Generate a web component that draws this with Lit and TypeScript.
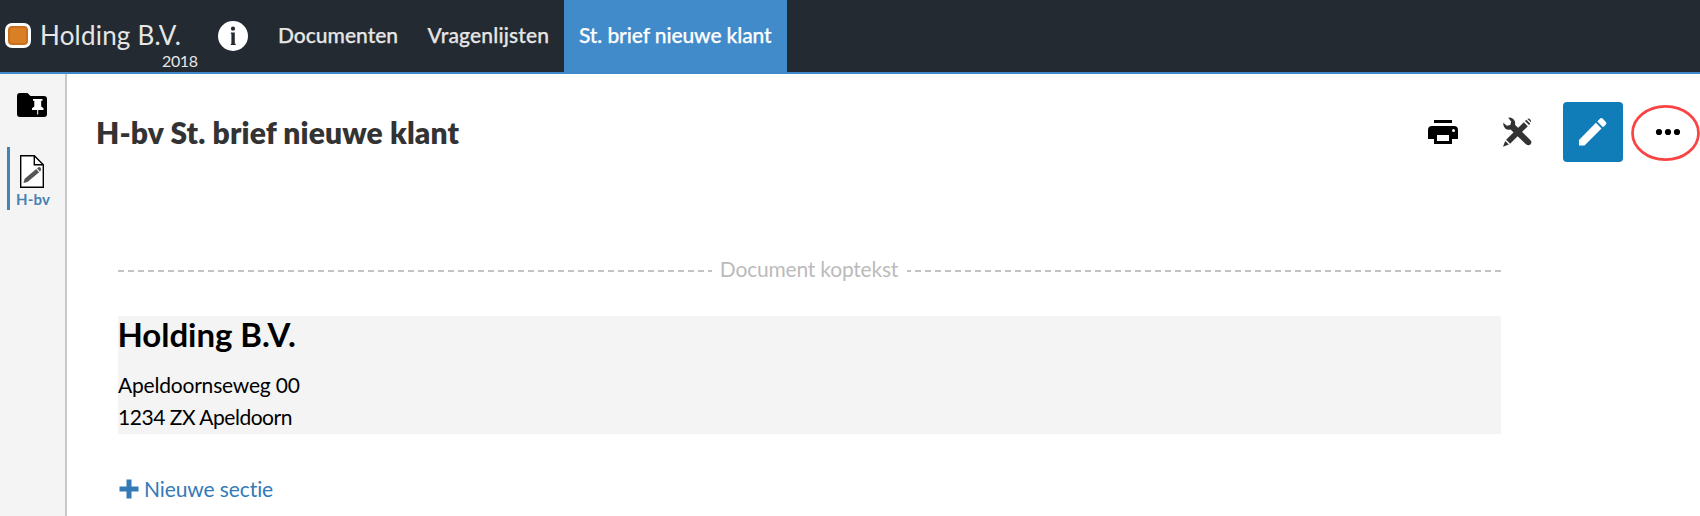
import { LitElement, html, css } from "lit";
import { customElement } from "lit/decorators.js";

@customElement("app-root")
export class AppRoot extends LitElement {
  static styles = css`
    :host { display: block; height: 516px; overflow: hidden; background: #fff; font-family: Lato, sans-serif; font-variant-ligatures: none; color: #333; }
    * { box-sizing: border-box; }
    svg { display: block; flex: none; }
    .bar { height: 74px; display: flex; background: #232a31; border-bottom: 2px solid #428bca; color: #e6e6e6; white-space: nowrap; }
    .brand { width: 203px; padding: 21px 0 0 5px; display: flex; flex-direction: column; }
    .brand-row { display: flex; align-items: center; height: 29px; }
    .swatch { width: 26px; height: 25px; border: 3px solid #fff; border-radius: 7px; background: #d98026; box-shadow: inset 0 0 0 2px #c87020; }
    .name { margin-left: 9px; font-size: 26px; line-height: 27px; letter-spacing: 0.2px; }
    .year { font-size: 16px; line-height: 22px; margin-left: 157px; letter-spacing: -0.35px; }
    .info { margin: 21px 0 0 15px; width: 30px; height: 30px; }
    nav { display: flex; margin-left: 15px; }
    .tab { height: 72px; padding: 0 15px; font-size: 21px; line-height: 69px; font-weight: 500; -webkit-text-stroke: 0.25px currentColor; }
    .docs { width: 149px; }
    .lists { width: 152px; padding-left: 15.5px; letter-spacing: 0.15px; }
    .active { width: 223px; background: #428bca; color: #fff; height: 74px; letter-spacing: -0.1px; }
    .body { display: flex; height: 442px; }
    aside { width: 67px; background: #f4f4f4; border-right: 2px solid #c8c8c8; }
    .pinned { padding: 19px 0 0 17px; height: 73px; }
    .doc { margin-left: 7px; height: 63px; border-left: 3px solid #4682b4; padding: 8px 0 0 6px; }
    .doc svg { margin-left: 4px; }
    .doc span { display: block; font-size: 15px; line-height: 22px; color: #4682b4; font-weight: 700; letter-spacing: 0.2px; }
    main { flex: 1; }
    .head { display: flex; height: 117px; padding: 28px 0 0 29px; }
    h1 { margin: 0; flex: 1; font-size: 30px; line-height: 60px; font-weight: 800; white-space: nowrap; letter-spacing: 0.14px; }
    .tools { display: flex; }
    .tool { width: 60px; height: 60px; display: flex; align-items: center; justify-content: center; border-radius: 4px; }
    .tool + .tool { margin-left: 15px; }
    .edit { background: #107db8; }
    .tool.more { width: 69px; height: 60px; margin-left: 8px; }
    .sheet { width: 1383px; margin-left: 51px; padding-top: 62px; }
    .divider { display: flex; align-items: center; height: 36px; color: #bbb; font-size: 21px; letter-spacing: -0.2px; }
    .rule { flex: 1; height: 2px; background: repeating-linear-gradient(90deg, #c3c3c3 0 6px, transparent 6px 10px); }
    .rule.end { background: repeating-linear-gradient(270deg, #c3c3c3 0 6px, transparent 6px 10px); }
    .divider span { margin: 0 9px 0 8px; white-space: nowrap; line-height: 31px; padding-bottom: 5px; }
    .letterhead { margin-top: 27px; height: 118px; background: #f4f4f4; color: #000; white-space: nowrap; }
    h2 { margin: 0 0 0 -0.5px; font-size: 33px; line-height: 36px; font-weight: 700; letter-spacing: -0.05px; }
    .address { padding-top: 17px; font-size: 21px; line-height: 32px; }
    .street { letter-spacing: -0.2px; }
    .city { letter-spacing: -0.47px; }
    .add { display: flex; align-items: center; margin-top: 39px; height: 32px; color: #337ab7; font-size: 21px; line-height: 32px; letter-spacing: -0.1px; }
    .add svg { margin-left: 1px; }
    .add span { margin-left: 5px; }
  `;

  render() {
    return html`
      <header class="bar">
        <div class="brand">
          <div class="brand-row"><div class="swatch"></div><span class="name">Holding B.V.</span></div>
          <span class="year">2018</span>
        </div>
        <svg class="info" viewBox="0 0 30 30"><circle cx="15" cy="15" r="15" fill="#fff"/><circle cx="15" cy="7.700" r="2.100" fill="#232a31"/><path fill="#232a31" d="M12.800 11.500h4v11.300h.9v1.200h-4.900v-1.200h.6v-10.100h-.6z"/></svg>
        <nav>
          <span class="tab docs">Documenten</span><span class="tab lists">Vragenlijsten</span><span class="tab active">St. brief nieuwe klant</span>
        </nav>
      </header>
      <div class="body">
        <aside>
          <div class="pinned">
            <svg width="30" height="24" viewBox="0 0 30 24"><path d="M3 0h7.500l3 3H27a3 3 0 0 1 3 3v15a3 3 0 0 1-3 3H3a3 3 0 0 1-3-3V3a3 3 0 0 1 3-3z"/><path fill="#fff" d="M16 6h9.500v1.800h-1.300v5.700l2.300 1.700v1.800h-5.300v4.500h-1V17H15v-1.800l2.300-1.700V7.800H16z"/></svg>
          </div>
          <div class="doc">
            <svg width="24" height="33" viewBox="0 0 24 33"><path d="M.7.700h13.600l9 9v22.600H.7z" fill="#fff" stroke="#000" stroke-width="1.400"/><path d="M14.300.700v9h9" fill="none" stroke="#000" stroke-width="1.400"/><path d="M3.400 28l1.300-4.300L16.200 14l2.900 3.200L7.500 27zM17 13.300l1.100-.9q1.500-.9 2.500.3t.2 2.900l-.9.900z" fill="#555"/></svg>
            <span>H-bv</span>
          </div>
        </aside>
        <main>
          <div class="head">
            <h1><span class="title">H-bv St. brief nieuwe klant</span></h1>
            <div class="tools">
              <div class="tool"><svg width="30" height="24" viewBox="0 0 30 24"><path d="M6 0h18v3H6zM4 6h22a4 4 0 0 1 4 4v9h-6v5H6v-5H0v-9a4 4 0 0 1 4-4z"/><path fill="#fff" d="M9 15h12v6H9z"/><circle cx="25.500" cy="10.500" r="1.500" fill="#fff"/></svg></div>
              <div class="tool"><svg width="30" height="30" viewBox="0.500 0 30 30" fill="#333"><path d="M5.700.700Q9 0 11.200 2.500t1.300 5.300L28 23.200q1.800 2 .1 4t-4.300.4L8 12.400q-3 .9-5.300-1T.8 5.700l3.500 3 3.500-.8.900-3.400z"/><path d="M21.300 5.200l4 4L7.600 26.700l-4-4zM22.500 4l1.300-1.300 4 4L26.500 8zM24.800 1.800q1.300-1 2.700.5t.9 3zM2.700 23.900l3.700 3.700L.5 29.800z"/></svg></div>
              <div class="tool edit"><svg width="30" height="30" viewBox="0 0 30 30" fill="#fff"><path d="M17.900 5.800l5.600 5.600L6.500 28.500H1v-5.600zM19.300 4.400l2.800-2.800q1.200-1.100 2.400 0l3.400 3.400q1.100 1.200 0 2.400L25 10.200z"/></svg></div>
              <div class="tool more"><svg width="69" height="60" viewBox="0 0 69 60"><ellipse cx="34.500" cy="31" rx="33" ry="26.700" fill="none" stroke="#fa4444" stroke-width="2.700"/><circle cx="28" cy="30" r="3.100"/><circle cx="37" cy="30" r="3.100"/><circle cx="46" cy="30" r="3.100"/></svg></div>
            </div>
          </div>
          <section class="sheet">
            <div class="divider"><i class="rule"></i><span>Document koptekst</span><i class="rule end"></i></div>
            <div class="letterhead">
              <h2>Holding B.V.</h2>
              <div class="address"><div class="street">Apeldoornseweg 00</div><div class="city">1234 ZX Apeldoorn</div></div>
            </div>
            <div class="add"><svg width="20" height="20" viewBox="0 0 20 20"><path fill="#337ab7" d="M7.500.500h5v7h7v5h-7v7h-5v-7h-7v-5h7z"/></svg><span>Nieuwe sectie</span></div>
          </section>
        </main>
      </div>`;
  }
}
